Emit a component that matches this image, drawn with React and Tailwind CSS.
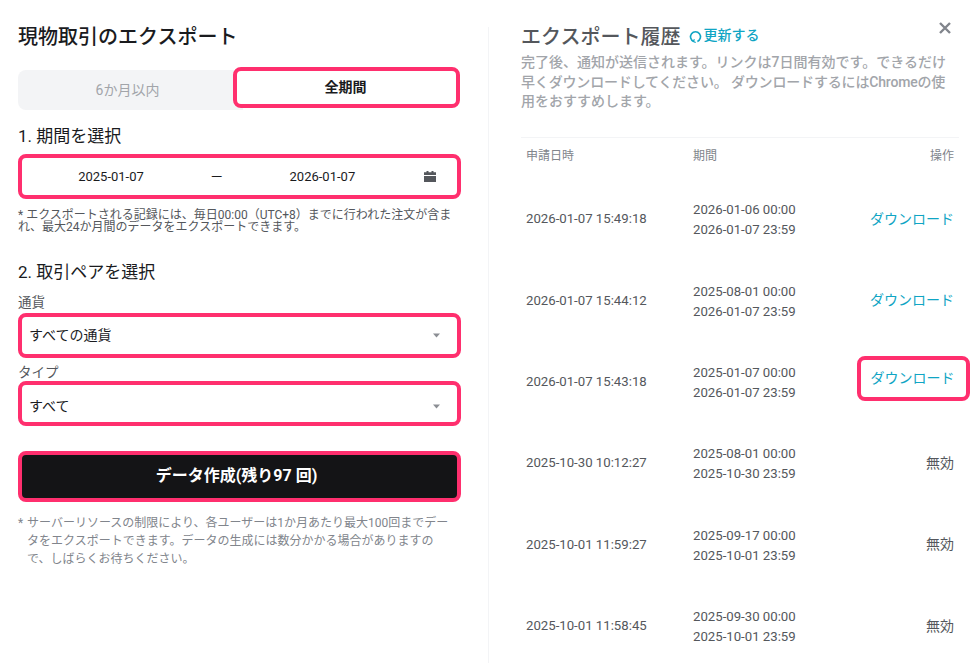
const font = { fontFamily: '"Roboto","Noto Sans CJK JP",sans-serif' };

const rows = [
  ["2026-01-07 15:49:18", "2026-01-06 00:00", "2026-01-07 23:59", "dl"],
  ["2026-01-07 15:44:12", "2025-08-01 00:00", "2026-01-07 23:59", "dl"],
  ["2026-01-07 15:43:18", "2025-01-07 00:00", "2026-01-07 23:59", "hl"],
  ["2025-10-30 10:12:27", "2025-08-01 00:00", "2025-10-30 23:59", "no"],
  ["2025-10-01 11:59:27", "2025-09-17 00:00", "2025-10-01 23:59", "no"],
  ["2025-10-01 11:58:45", "2025-09-30 00:00", "2025-10-01 23:59", "no"],
];

function Caret() {
  return (
    <svg width="7" height="5" viewBox="0 0 7 5" className="shrink-0">
      <path d="M0 0.5h7L3.5 4.5z" fill="#8b8e94" />
    </svg>
  );
}

function Select({ label, className }) {
  return (
    <div className={`flex items-center justify-between rounded-lg border-4 border-[#ff2f6e] bg-white pl-[7px] pr-[17px] text-[14px] text-[#1a1b1e] ${className}`}>
      <span>{label}</span>
      <Caret />
    </div>
  );
}

export default function App() {
  return (
    <div style={font} className="relative flex h-[663px] w-[974px] overflow-hidden bg-white">
      <div className="w-[488px] shrink-0 pl-[18px] pr-[27px] pt-[24px]">
        <h1 className="h-[27px] text-[20px] font-medium leading-[27px] text-[#1a1b1e]">現物取引のエクスポート</h1>
        <div className="mt-[16px] flex h-[41px]">
          <div className="mt-[3px] flex h-[40px] w-[225px] items-center justify-center rounded-l-lg bg-[#f3f4f6] pl-[4px] pr-[10px] text-[14px] text-[#a2a5aa]">6か月以内</div>
          <div className="-ml-[10px] flex h-[41px] w-[227px] items-center justify-center rounded-lg border-4 border-[#ff2f6e] bg-white pr-[2px] text-[14px] font-bold text-[#1a1b1e]">全期間</div>
        </div>
        <h2 className="mt-[17px] text-[17px] leading-[22px] text-[#1a1b1e]">1. 期間を選択</h2>
        <div className="mt-[7px] flex h-[45px] items-center rounded-lg border-4 border-[#ff2f6e] bg-white text-[13px] text-[#1a1b1e]">
          <span className="ml-[56px] w-[66px] text-center">2025-01-07</span>
          <span className="ml-[68px] scale-x-125 text-[12px]">—</span>
          <span className="ml-[68px] w-[66px] text-center">2026-01-07</span>
          <svg width="12" height="11" viewBox="0 0 12 11" className="ml-[69px]">
            <path d="M2.5 0h2v1.2h3V0h2v1.2H12V4H0V1.2h2.5zM0 5h12v6H0z" fill="#54575c" />
          </svg>
        </div>
        <p className="mt-[10px] text-[12px] leading-[12px] text-[#54575c]">
          * エクスポートされる記録には、毎日00:00（UTC+8）までに行われた注文が含まれ、最大24か月間のデータをエクスポートできます。
        </p>
        <h2 className="mt-[28px] text-[17px] leading-[22px] text-[#1a1b1e]">2. 取引ペアを選択</h2>
        <div className="mt-[12px] text-[13.5px] leading-[14px] text-[#54575c]">通貨</div>
        <Select label="すべての通貨" className="mt-[4px] h-[45px]" />
        <div className="mt-[7px] text-[13.5px] leading-[14px] text-[#54575c]">タイプ</div>
        <Select label="すべて" className="mt-[2px] h-[45px] pt-[5px]" />
        <button className="mt-[25px] flex h-[51px] w-full items-center justify-center rounded-lg border-4 border-[#ff2f6e] bg-[#141416] pb-[1px] pr-[6px] text-[16px] font-bold text-white">
          データ作成(残り97 回)
        </button>
        <div className="mt-[12px] flex whitespace-nowrap text-[12px] leading-[18px] text-[#81858c]">
          <span className="w-[9px] shrink-0">*</span>
          <p>
            サーバーリソースの制限により、各ユーザーは1か月あたり最大100回までデー<br />
            タをエクスポートできます。データの生成には数分かかる場合がありますの<br />
            で、しばらくお待ちください。
          </p>
        </div>
      </div>

      <div className="mt-[27px] flex-1 border-l border-[#f3f4f6] pl-[32px] pr-[15px]">
        <div className="mt-[1px] flex items-center">
          <h2 className="text-[20px] font-medium leading-[18px] text-[#54575c]">エクスポート履歴</h2>
          <svg width="13" height="13" viewBox="0 0 13 13" className="-mt-[1px] ml-[9px]" fill="none" stroke="#10a5c4" strokeWidth="1.6">
            <path d="M4.6 11.4A5 5 0 1 1 8.4 11.4" />
            <path d="M5.4 9.3l-1 2.2 2.3 1" strokeWidth="1.2" />
          </svg>
          <span className="-mt-[4px] ml-[1px] text-[14px] font-medium leading-[18px] text-[#10a5c4]">更新する</span>
        </div>
        <div className="mt-[7px] whitespace-nowrap text-[14px] font-medium leading-[19.5px] text-[#a2a5aa]">
          <p>完了後、通知が送信されます。リンクは7日間有効です。できるだけ</p>
          <p className="tracking-[-0.17px]">早くダウンロードしてください。 ダウンロードするにはChromeの使</p>
          <p>用をおすすめします。</p>
        </div>
        <div className="mt-[25px] border-t border-[#f3f4f6] px-[5px] pb-0">
          <div className="flex h-[37px] items-center text-[12px] text-[#81858c]">
            <span className="w-[167px]">申請日時</span>
            <span className="flex-1">期間</span>
            <span className="text-[#81858c]">操作</span>
          </div>
          <div className="mt-[4px]">
            {rows.map((r) => (
              <div key={r[0]} className="flex h-[81.4px] items-center text-[13.2px] text-[#54575c]">
                <span className="w-[167px]">{r[0]}</span>
                <div className="flex-1 pt-[2px] leading-[20px]">
                  <div>{r[1]}</div>
                  <div>{r[2]}</div>
                </div>
                {r[3] === "dl" && <span className="text-[14px] text-[#10a5c4]">ダウンロード</span>}
                {r[3] === "hl" && (
                  <span className="-mr-[16px] mb-[7px] flex h-[45px] w-[113px] items-center justify-center rounded-lg border-4 border-[#ff2f6e] pr-[2px] pt-[1px] text-[14px] text-[#10a5c4]">ダウンロード</span>
                )}
                {r[3] === "no" && <span className="text-[14px] text-[#54575c]">無効</span>}
              </div>
            ))}
          </div>
        </div>
      </div>

      <svg width="12" height="12" viewBox="0 0 12 12" className="absolute left-[939px] top-[22px]" stroke="#81858c" strokeWidth="2.4" fill="none">
        <path d="M1 1l10 10M11 1L1 11" />
      </svg>
    </div>
  );
}
